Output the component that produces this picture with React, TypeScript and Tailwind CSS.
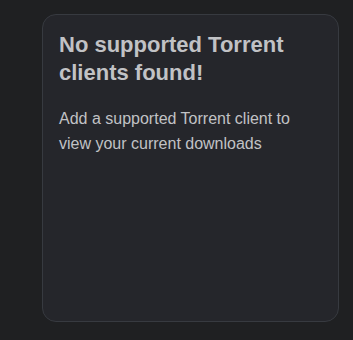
export default function App() {
  return (
    <div className="w-[353px] h-[340px] bg-[#1f2022] pt-[14px] pl-[42px]" style={{ fontFamily: '"Liberation Sans", Arial, sans-serif' }}>
      <div className="w-[297px] h-[308px] rounded-[14px] border border-[#373a40] bg-[#25262b] p-4">
        <h2 className="text-[22px] leading-[28px] font-bold text-[#c1c2c5]">No supported Torrent clients found!</h2>
        <p className="mt-[19px] text-[16px] leading-[25px] text-[#c1c2c5]">Add a supported Torrent client to view your current downloads</p>
      </div>
    </div>
  );
}
